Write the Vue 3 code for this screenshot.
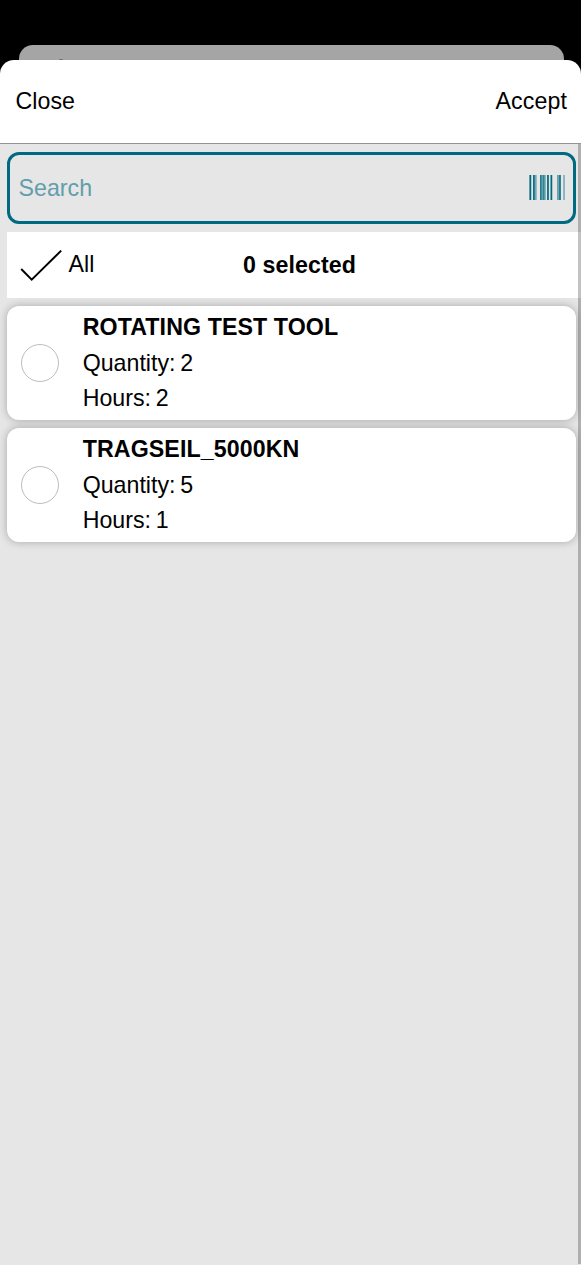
<script setup>
const items = [
  { name: 'ROTATING TEST TOOL', quantity: 2, hours: 2 },
  { name: 'TRAGSEIL_5000KN', quantity: 5, hours: 1 },
]
// Barcode stripes: offset, width, opacity
const bars = [
  [0, 1, 0.6], [1, 1, 1], [2, 1, 0.25], [4, 1, 0.95], [5, 1, 0.8], [6, 1, 0.5], [7, 1, 0.35],
  [11, 1, 0.85], [12, 1, 0.7], [13, 1, 0.55], [14, 1, 0.8], [15, 1, 0.6], [16, 1, 0.4],
  [18, 1, 0.9], [19, 1, 0.85], [21, 1, 0.5], [22, 1, 1], [23, 1, 0.25],
  [28, 1, 0.55], [29, 1, 0.5], [30, 1, 0.85], [31, 1, 0.8], [34, 1, 0.35], [35, 1, 0.4],
]
</script>

<template>
  <div class="screen">
    <div class="behind"><span class="speck"></span></div>
    <div class="sheet">
      <header class="bar">
        <span class="close">Close</span>
        <span class="accept">Accept</span>
      </header>
      <main class="body">
        <div class="search">
          <span class="placeholder">Search</span>
          <svg class="barcode" width="36" height="25" viewBox="0 0 36 25">
            <rect v-for="b in bars" :key="b[0]" :x="b[0]" y="0" :width="b[1]" height="25" :opacity="b[2]" fill="#006a80" />
          </svg>
        </div>
        <div class="select">
          <svg class="check" width="44" height="34" viewBox="0 0 44 34">
            <path d="M1.2 21 11.7 31.7 41.2 2.6" fill="none" stroke="#000" stroke-width="2" />
          </svg>
          <span class="all">All</span>
          <strong class="count">0 selected</strong>
        </div>
        <div v-for="item in items" :key="item.name" class="card">
          <span class="radio"></span>
          <div class="info">
            <strong class="name">{{ item.name }}</strong>
            <span>Quantity: {{ item.quantity }}</span>
            <span>Hours: {{ item.hours }}</span>
          </div>
        </div>
        <div class="scroll"></div>
      </main>
    </div>
  </div>
</template>

<style>
body { background: #000; overflow: hidden; }
</style>
<style scoped>
.screen {
  width: 581px;
  height: 1265px;
  box-sizing: border-box;
  padding-top: 45px;
  background: #000;
  overflow: hidden;
  font-family: "Liberation Sans", Arial, sans-serif;
  font-size: 23.2px;
  line-height: 35px;
  color: #000;
}
.behind {
  height: 15px;
  margin: 0 17px 0 19px;
  border-radius: 14px 14px 0 0;
  background: #a5a5a5;
  display: flex;
  align-items: flex-end;
}
.speck { width: 4px; height: 1px; margin-left: 40px; background: #777; }
.sheet {
  height: 1205px;
  border-radius: 14px 14px 0 0;
  background: #fff;
  overflow: hidden;
}
.bar {
  height: 83px;
  padding: 0 14px 0 15.6px;
  display: flex;
  justify-content: space-between;
  align-items: center;
}
.accept { letter-spacing: 0.1px; }
.body {
  position: relative;
  height: 1122px;
  box-sizing: border-box;
  border-top: 1px solid #909592;
  padding: 8px 5px 0 7px;
  background: #e6e6e6;
}
.search {
  height: 72px;
  box-sizing: border-box;
  border: 3px solid #006a80;
  border-radius: 12px;
  padding: 0 8px 0 8.6px;
  display: flex;
  justify-content: space-between;
  align-items: center;
}
.barcode { margin-bottom: 1px; }
.placeholder { color: #629dac; }
.select {
  height: 66px;
  margin: 8px -5px 8px 0;
  background: #fff;
  display: flex;
  align-items: center;
}
.check { margin-left: 13px; }
.all { margin: -2px 0 0 4.6px; width: 26.4px; }
.count { margin-left: 148px; letter-spacing: 0.1px; }
.card {
  height: 114px;
  margin-bottom: 8px;
  border-radius: 12px;
  background: #fff;
  box-shadow: 0 0 9px rgba(0, 0, 0, 0.28);
  display: flex;
  align-items: center;
}
.radio {
  width: 38px;
  height: 38px;
  box-sizing: border-box;
  margin-left: 14px;
  border: 1px solid #bdbdbd;
  border-radius: 50%;
}
.info {
  display: flex;
  flex-direction: column;
  margin: 1px 0 0 23.7px;
  line-height: 35.5px;
  word-spacing: -1.6px;
}
.name { letter-spacing: 0.1px; word-spacing: 0; }
.scroll {
  position: absolute;
  top: 0;
  right: 0;
  width: 3px;
  height: 1120px;
  background: rgba(0, 0, 0, 0.24);
}
</style>
